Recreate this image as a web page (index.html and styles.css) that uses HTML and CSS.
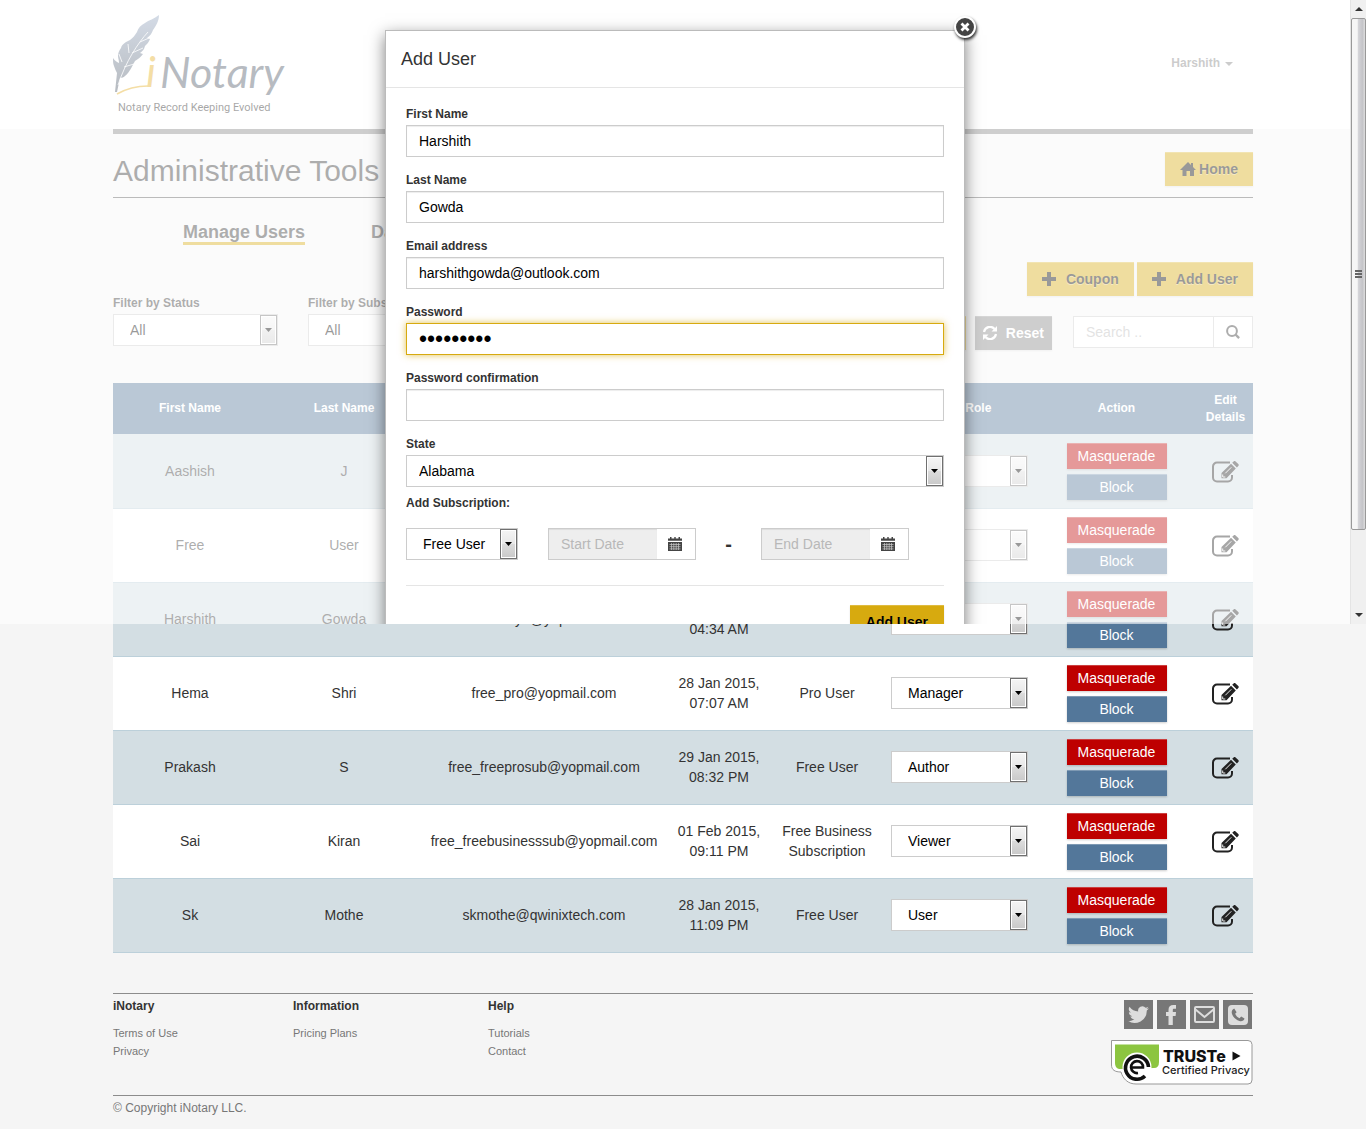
FILE: index.html
```html
<!DOCTYPE html>
<html lang="en">
<head>
<meta charset="utf-8">
<title>iNotary - Administrative Tools</title>
<meta name="viewport" content="width=device-width, initial-scale=1">
<link rel="stylesheet" href="styles.css">
</head>
<body>
<svg class="sprite" aria-hidden="true">
  <symbol id="i-edit" viewBox="0 0 27 22">
    <path d="M18 1.500H5A4 4 0 0 0 1 5.500v11a4 4 0 0 0 4 4h11a4 4 0 0 0 4-4V14" fill="none" stroke="currentColor" stroke-width="2"/>
    <path d="M9.500 12 19 2.800l4.800 4.800L14.500 17.200h-5zM20.200 1.800 21.600.4q1-.9 2 0l2.700 2.700q.9 1 0 2L24.900 6.500z" fill="currentColor"/>
    <path d="M10.700 13.500v2.500h2.600M13.300 12.300l6-6" stroke="#fff" fill="none" stroke-width=".9"/>
  </symbol>
  <symbol id="i-cal" viewBox="0 0 14 14">
    <path d="M0 1.500h2V0h1.500v1.500h2.800V0h1.400v1.500h2.800V0H12v1.500h2v2.300H0z" fill="#444"/>
    <path d="M0 5h14v9H0z" fill="#444"/>
    <path d="M1.500 7.500h11M1.500 9.700h11M1.500 11.900h11M3.500 6v7M5.800 6v7M8.200 6v7M10.500 6v7" stroke="#ccc" stroke-width=".7"/>
  </symbol>
  <symbol id="i-plus" viewBox="0 0 14 14"><path d="M5 0h4v5h5v4H9v5H5V9H0V5h5z" fill="currentColor"/></symbol>
</svg>

<header class="site-header">
  <div class="container header-row">
    <a class="logo" href="#" aria-label="iNotary">
      <svg width="180" height="104" viewBox="0 0 180 104">
        <defs><linearGradient id="quill" x1="0" y1="0" x2="0" y2="1"><stop offset="0" stop-color="#93a5c0"/><stop offset="1" stop-color="#4b5664"/></linearGradient></defs>
        <path d="M46 0C41 4 36 5 32 8c-4 2-7 5-8 9-2 3-4 6-7 8-4 2-8 4-9 8-2 3-3 5-3 8 0 2 1 4 1 7-2-1-4-2-6-5 0 3 0 6 1 8 1 3 2 5 3 7L2 77h2l3-14c2 0 4-1 5-2 5-4 7-10 10-15 3-2 6-4 8-7l-3-1c4-3 4-4 5-7 2-2 4-4 5-7l-3-1c3-2 5-5 6-8 3-4 6-9 6-15z" fill="url(#quill)"/>
        <path d="M35 17C25 28 13 46 5 70M9 47l-3-8M16 38l-1-9M11 52l10-3M19 38l11-5M27 27l9-4" fill="none" stroke="#fff" stroke-width=".8"/>
        <path d="M4 79q14-8 31-8" fill="none" stroke="#e3ac1f" stroke-width="1.500"/>
        <text class="logo-i" x="33" y="72">i</text>
        <text class="logo-name" x="47" y="73">Notary</text>
        <text class="logo-tag" x="5" y="96">Notary Record Keeping Evolved</text>
      </svg>
    </a>
    <a class="user-menu" href="#">Harshith <span class="caret"></span></a>
  </div>
</header>

<main class="container main">
  <div class="title-row">
    <h1>Administrative Tools</h1>
    <button class="btn btn-gold home" type="button"><svg width="16" height="14" viewBox="0 0 16 14"><path d="M8 0 11 3V1h2v4l3 3h-2v6h-4V9H6.500v5H2.500V8H0z" fill="currentColor"/></svg><span>Home</span></button>
  </div>
  <nav class="tabs"><a class="active" href="#">Manage Users</a><a href="#">Dashboard</a></nav>

  <div class="toolbar">
    <div class="filters">
      <div class="filter"><label for="f-status">Filter by Status</label><select id="f-status"><option>All</option></select></div>
      <div class="filter"><label for="f-sub">Filter by Subscription</label><select id="f-sub"><option>All</option></select></div>
    </div>
    <div class="actions">
      <div class="action-row add-row">
        <button class="btn btn-gold wide" type="button"><svg width="14" height="14"><use href="#i-plus"/></svg><span>Coupon</span></button>
        <button class="btn btn-gold wide" type="button"><svg width="14" height="14"><use href="#i-plus"/></svg><span>Add User</span></button>
      </div>
      <div class="action-row">
        <button class="btn btn-gold" type="button">Filter</button>
        <button class="btn btn-gray" type="button"><svg width="14" height="14" viewBox="0 0 14 14"><path d="M1 6A6 6 0 0 1 11.500 3M13 8A6 6 0 0 1 2.500 11" fill="none" stroke="currentColor" stroke-width="2.200"/><path d="M14 0v5.500H8.500zM0 14V8.500h5.500z" fill="currentColor"/></svg><span>Reset</span></button>
        <div class="search">
          <input type="text" placeholder="Search .." aria-label="Search">
          <button type="button" aria-label="Search"><svg width="14" height="14" viewBox="0 0 14 14"><circle cx="6" cy="6" r="4.900" fill="none" stroke="currentColor" stroke-width="2"/><path d="m9.500 9.500 3.600 3.600" stroke="currentColor" stroke-width="2.400"/></svg></button>
        </div>
      </div>
    </div>
  </div>

  <table class="users">
    <colgroup><col class="c-name"><col class="c-name"><col class="c-mail"><col class="c-date"><col class="c-sub"><col class="c-role"><col class="c-act"><col class="c-edit"></colgroup>
    <thead><tr><th>First Name</th><th>Last Name</th><th>Email</th><th>Created</th><th>Subscription</th><th>Select Role</th><th>Action</th><th>Edit Details</th></tr></thead>
    <tbody>
      <tr><td>Aashish</td><td>J</td><td>aashish@yopmail.com</td><td>28 Jan 2015, 05:10 AM</td><td>Free User</td><td><select aria-label="Role of Aashish"><option>User</option></select></td><td class="act"><button class="mini red" type="button">Masquerade</button><button class="mini blue" type="button">Block</button></td><td class="act"><a class="edit" href="#" aria-label="Edit"><svg width="27" height="22"><use href="#i-edit"/></svg></a></td></tr>
      <tr><td>Free</td><td>User</td><td>free_user@yopmail.com</td><td>28 Jan 2015, 06:22 AM</td><td>Free User</td><td><select aria-label="Role of Free"><option>User</option></select></td><td class="act"><button class="mini red" type="button">Masquerade</button><button class="mini blue" type="button">Block</button></td><td class="act"><a class="edit" href="#" aria-label="Edit"><svg width="27" height="22"><use href="#i-edit"/></svg></a></td></tr>
      <tr><td>Harshith</td><td>Gowda</td><td>harshithya@yopmail.com</td><td>28 Jan 2015, 04:34 AM</td><td>Free User</td><td><select aria-label="Role of Harshith"><option>User</option></select></td><td class="act"><button class="mini red" type="button">Masquerade</button><button class="mini blue" type="button">Block</button></td><td class="act"><a class="edit" href="#" aria-label="Edit"><svg width="27" height="22"><use href="#i-edit"/></svg></a></td></tr>
      <tr><td>Hema</td><td>Shri</td><td>free_pro@yopmail.com</td><td>28 Jan 2015, 07:07 AM</td><td>Pro User</td><td><select aria-label="Role of Hema"><option>Manager</option></select></td><td class="act"><button class="mini red" type="button">Masquerade</button><button class="mini blue" type="button">Block</button></td><td class="act"><a class="edit" href="#" aria-label="Edit"><svg width="27" height="22"><use href="#i-edit"/></svg></a></td></tr>
      <tr><td>Prakash</td><td>S</td><td>free_freeprosub@yopmail.com</td><td>29 Jan 2015, 08:32 PM</td><td>Free User</td><td><select aria-label="Role of Prakash"><option>Author</option></select></td><td class="act"><button class="mini red" type="button">Masquerade</button><button class="mini blue" type="button">Block</button></td><td class="act"><a class="edit" href="#" aria-label="Edit"><svg width="27" height="22"><use href="#i-edit"/></svg></a></td></tr>
      <tr><td>Sai</td><td>Kiran</td><td>free_freebusinesssub@yopmail.com</td><td>01 Feb 2015, 09:11 PM</td><td>Free Business Subscription</td><td><select aria-label="Role of Sai"><option>Viewer</option></select></td><td class="act"><button class="mini red" type="button">Masquerade</button><button class="mini blue" type="button">Block</button></td><td class="act"><a class="edit" href="#" aria-label="Edit"><svg width="27" height="22"><use href="#i-edit"/></svg></a></td></tr>
      <tr><td>Sk</td><td>Mothe</td><td>skmothe@qwinixtech.com</td><td>28 Jan 2015, 11:09 PM</td><td>Free User</td><td><select aria-label="Role of Sk"><option>User</option></select></td><td class="act"><button class="mini red" type="button">Masquerade</button><button class="mini blue" type="button">Block</button></td><td class="act"><a class="edit" href="#" aria-label="Edit"><svg width="27" height="22"><use href="#i-edit"/></svg></a></td></tr>
    </tbody>
  </table>
</main>

<footer class="container footer">
  <div class="footer-main">
    <div class="fcol first"><h2>iNotary</h2><a href="#">Terms of Use</a><a href="#">Privacy</a></div>
    <div class="fcol second"><h2>Information</h2><a href="#">Pricing Plans</a></div>
    <div class="fcol"><h2>Help</h2><a href="#">Tutorials</a><a href="#">Contact</a></div>
    <div class="badges">
      <div class="social">
        <a href="#" aria-label="Twitter"><svg width="21" height="21" viewBox="0 0 24 24"><path fill="#ddd" d="M23.900 4.900a10 10 0 0 1-2.800.8 5 5 0 0 0 2.100-2.700 10 10 0 0 1-3.100 1.200 4.900 4.900 0 0 0-8.400 4.500A14 14 0 0 1 1.700 3.200a4.900 4.900 0 0 0 1.500 6.500 5 5 0 0 1-2.200-.6 4.900 4.900 0 0 0 3.900 4.900 5 5 0 0 1-2.200.1 4.900 4.900 0 0 0 4.600 3.400A10 10 0 0 1 0 19.500 14 14 0 0 0 21.500 7.400a10 10 0 0 0 2.400-2.500z"/></svg></a>
        <a href="#" aria-label="Facebook"><svg width="11" height="20" viewBox="0 0 11 20"><path fill="#ddd" d="M2.500 20v-9H0V7h2.500V5c0-3.300 1.700-5 5-5H10v3.800H8.200C7 3.800 6.800 4.300 6.800 5.200V7H10l-.4 4H6.800v9z"/></svg></a>
        <a href="#" aria-label="Email"><svg width="21" height="17" viewBox="0 0 21 17"><rect x="1" y="1" width="19" height="15" rx="1" fill="none" stroke="#ddd" stroke-width="2"/><path d="m1.500 3.500 9 7.500 9-7.500" fill="none" stroke="#ddd" stroke-width="2"/></svg></a>
        <a href="#" aria-label="Phone"><svg width="20" height="20" viewBox="0 0 20 20"><rect width="20" height="20" rx="4" fill="#ddd"/><path d="M6.200 3.500C4 4.500 3 7 4.200 9.500c1.500 3.300 4 5.500 7.300 6.500 2.300.6 4.500-.4 5-2.500l-3.300-2-1.700 1.700C9.200 12 8 10.600 7.200 8.700L8.600 7.200z" fill="#777"/></svg></a>
      </div>
      <a class="truste" href="#" aria-label="TRUSTe Certified Privacy">
        <svg width="142" height="45" viewBox="0 0 142 45">
          <path d="M.5.500H137a4 4 0 0 1 4 4V40a4 4 0 0 1-4 4H25C17 44 12 39 10 32 4 32 .5 30 .5 25z" fill="#fff" stroke="#999"/>
          <path d="M4 4.500h44V22q0 6-5 6L8 29q-4-1-4-6z" fill="#8cc540"/>
          <circle cx="26" cy="27" r="14.500" fill="#fff"/>
          <path d="M37.500 27A11.500 11.500 0 1 0 34 36" fill="none" stroke="#111" stroke-width="3.600"/>
          <path d="M20 27.500H32A6 6 0 1 0 27 33" fill="none" stroke="#111" stroke-width="2.600"/>
          <text class="tr-name" x="52" y="22">TRUSTe</text>
          <path d="m121.500 11.500 8 4.500-8 4.500z" fill="#111"/>
          <text class="tr-sub" x="51" y="34">Certified Privacy</text>
        </svg>
      </a>
    </div>
  </div>
  <p class="copy">© Copyright iNotary LLC.</p>
</footer>

<div class="overlay">
  <div class="overlay-body">
    <section class="modal" role="dialog" aria-labelledby="m-title">
      <button class="close" type="button" aria-label="Close"><svg width="10" height="10" viewBox="0 0 10 10"><path d="m1.500 1.500 7 7m0-7-7 7" stroke="#fff" stroke-width="2.800"/></svg></button>
      <h2 id="m-title">Add User</h2>
      <form class="modal-form">
        <div class="group"><label for="fn">First Name</label><input id="fn" type="text" value="Harshith"></div>
        <div class="group"><label for="ln">Last Name</label><input id="ln" type="text" value="Gowda"></div>
        <div class="group"><label for="em">Email address</label><input id="em" type="email" value="harshithgowda@outlook.com"></div>
        <div class="group"><label for="pw">Password</label><input id="pw" class="focused" type="password" value="password1"></div>
        <div class="group"><label for="pc">Password confirmation</label><input id="pc" type="password"></div>
        <div class="group state"><label for="st">State</label><select id="st"><option>Alabama</option></select></div>
        <label for="plan">Add Subscription:</label>
        <div class="sub-row">
          <select id="plan"><option>Free User</option></select>
          <div class="date"><input type="text" placeholder="Start Date" aria-label="Start Date" disabled><button type="button" aria-label="Pick start date"><svg width="14" height="14"><use href="#i-cal"/></svg></button></div>
          <span class="dash">-</span>
          <div class="date"><input type="text" placeholder="End Date" aria-label="End Date" disabled><button type="button" aria-label="Pick end date"><svg width="14" height="14"><use href="#i-cal"/></svg></button></div>
        </div>
        <div class="modal-foot"><button class="btn btn-gold submit" type="submit">Add User</button></div>
      </form>
    </section>
  </div>
  <div class="scrollbar" aria-hidden="true">
    <span class="arrow up"></span>
    <span class="thumb"><i></i><i></i><i></i></span>
    <span class="arrow down"></span>
  </div>
</div>
</body>
</html>
```
FILE: styles.css
```css
* { box-sizing: border-box; }
body { margin: 0; background: #f5f5f5; color: #333; font: 14px/20px "Liberation Sans", Arial, sans-serif; }
a { color: inherit; text-decoration: none; }
button, input, select { font: inherit; color: inherit; margin: 0; border-radius: 0; }
svg { display: block; }
.sprite { display: none; }
label { display: block; font-size: 12px; line-height: 17px; font-weight: bold; }
.container { max-width: 1140px; margin: 0 auto; }

.site-header { background: #fff; }
.header-row { display: flex; justify-content: space-between; align-items: flex-start; min-height: 129px; padding-top: 15px; }
.logo-i, .logo-name { font-family: Lato, sans-serif; font-style: italic; font-weight: 400; font-size: 43px; fill: #4b5664; }
.logo-i { fill: #e3ac1f; }
.logo-tag { font: 400 11px Roboto, sans-serif; fill: #222; }
.user-menu { display: flex; align-items: center; gap: 5px; margin: 40px 20px 0 0; font-size: 12px; line-height: 17px; font-weight: bold; color: #7f7f7f; }
.caret { border: 4px solid transparent; border-top-color: currentColor; border-bottom: 0; }

.main { border-top: 5px solid #848484; }
.title-row { display: flex; justify-content: space-between; align-items: center; padding: 18px 0 11px; border-bottom: 1px solid #555; }
h1 { margin: 0; padding-top: 3px; font-size: 30px; line-height: 31px; font-weight: normal; }
.btn { display: flex; align-items: center; justify-content: center; gap: 4px; height: 34px; padding: 0 15px 2px; border: 0; border-top: 1px solid #dfbb3f; font-weight: bold; line-height: 20px; box-shadow: 0 1px 2px rgba(0,0,0,.1); }
.btn-gold { background: #d7aa0f; color: #000; text-shadow: 0 1px 0 rgba(255,255,255,.4); }
.btn-gray { background: #848484; border-color: #999; color: #fff; padding: 0 8px 2px; gap: 9px; }
.btn.home { gap: 3px; }
.btn.wide { gap: 10px; }
.btn.submit { padding: 0 16px 2px; }
.tabs { display: flex; gap: 66px; padding: 24px 0 0 70px; font-size: 18px; line-height: 20px; font-weight: bold; }
.tabs a { border-bottom: 3px solid transparent; }
.tabs .active { border-color: #d7aa0f; }

.toolbar { display: flex; justify-content: space-between; align-items: flex-end; margin: 17px 0 33px; }
.filters { display: flex; gap: 30px; padding-bottom: 4px; }
.filter { width: 165px; }
.filter label { margin-bottom: 2px; }
.actions { display: flex; flex-direction: column; gap: 20px; align-items: flex-end; }
.action-row { display: flex; gap: 9px; align-items: flex-start; }
.add-row { gap: 3px; }
.search { display: flex; width: 180px; height: 32px; margin-left: 12px; border: 1px solid #ccc; background: #fff; }
.search input { flex: 1; min-width: 0; border: 0; padding: 0 12px; background: none; }
.search button { width: 39px; padding: 0 12px; border: 0; border-left: 1px solid #ccc; background: none; }
::placeholder { color: #b8b8b8; opacity: 1; }

select, .group input { display: block; width: 100%; height: 32px; border: 1px solid #ccc; background-color: #fff; color: #000; }
select {
  appearance: none; padding: 0 18px 0 16px; background-repeat: no-repeat; background-position: right 0 center;
  background-image: url("data:image/svg+xml,%3Csvg xmlns='http://www.w3.org/2000/svg' width='17' height='30'%3E%3Cdefs%3E%3ClinearGradient id='g' x2='0' y2='1'%3E%3Cstop offset='0' stop-color='%23f4f4f4'/%3E%3Cstop offset='.5' stop-color='%23e8e8e8'/%3E%3Cstop offset='.5' stop-color='%23dcdcdc'/%3E%3Cstop offset='1' stop-color='%23cacaca'/%3E%3C/linearGradient%3E%3C/defs%3E%3Crect x='.5' y='.5' width='16' height='29' fill='%23fff' stroke='%23707070'/%3E%3Crect x='2' y='2' width='13' height='26' fill='url(%23g)'/%3E%3Cpath d='M5 13h7l-3.500 4z'/%3E%3C/svg%3E");
}

.users { width: 100%; table-layout: fixed; border-collapse: separate; border-spacing: 0; border-bottom: 1px solid #bcd0da; text-align: center; }
.c-name { width: 154px; } .c-mail { width: 246px; } .c-date { width: 104px; } .c-sub { width: 112px; }
.c-role { width: 152px; } .c-act { width: 163px; } .c-edit { width: 55px; }
.users th { height: 51px; padding: 0 7px; background: #53779a; color: #fff; font-size: 12px; line-height: 17px; }
.users td { height: 74px; padding: 7px 8px 9px; border-top: 1px solid #bcd0da; background: #fff; }
.users td.act { padding: 8px; }
.users td:nth-child(3) { padding: 7px 0 9px; }
.users td:nth-child(6) { padding-right: 7px; }
.users tr:nth-child(odd) td { background: #d3dee3; }
.users tbody tr:first-child td { border-color: #d3dee3; }
.mini { display: block; width: 100px; height: 26px; margin: 0 auto; padding: 0 0 2px; border: 0; border-top: 1px solid #cb4040; color: #fff; box-shadow: 0 1px 2px rgba(0,0,0,.2); }
.mini + .mini { margin-top: 5px; }
.red { background: #be0000; }
.blue { background: #53779a; border-color: #7e99b3; }
.edit { display: inline-block; vertical-align: middle; color: #222; }

.footer { margin-top: 40px; border-top: 1px solid #8c8c8c; }
.footer-main { display: flex; min-height: 102px; border-bottom: 1px solid #8c8c8c; }
.fcol { padding-top: 4px; font-size: 11px; line-height: 18px; color: #777; }
.fcol.first { width: 180px; } .fcol.second { width: 195px; }
.fcol h2 { margin: 0 0 9px; font-size: 12px; line-height: 17px; color: #333; }
.fcol a { display: block; }
.badges { margin-left: auto; padding-top: 6px; }
.social { display: flex; justify-content: flex-end; gap: 4px; padding-right: 1px; margin-bottom: 11px; }
.social a { display: flex; align-items: center; justify-content: center; width: 29px; height: 29px; background: #777; }
.tr-name { font: 800 16px Inter, sans-serif; fill: #111; }
.tr-sub { font: 500 11px Inter, sans-serif; fill: #222; }
.copy { margin: 4px 0 12px; font-size: 12px; line-height: 17px; color: #777; }

.overlay { position: absolute; top: 0; left: 0; right: 0; height: 624px; display: flex; overflow: hidden; background: rgba(255,255,255,.6); }
.overlay-body { flex: 1; padding-top: 30px; }
.modal { position: relative; width: 580px; margin: 0 auto; border: 1px solid #bbb; background: #fff; box-shadow: 0 5px 15px rgba(0,0,0,.5); }
.modal h2 { margin: 0; padding: 18px 15px; border-bottom: 1px solid #e5e5e5; font-size: 18px; line-height: 20px; font-weight: normal; }
.modal-form { padding: 18px 20px 20px; }
.group { margin-bottom: 15px; }
.group label { margin-bottom: 2px; }
.group input { padding: 0 12px; box-shadow: inset 0 1px 1px rgba(0,0,0,.075); }
.group input[type="password"] { font-size: 23px; }
.group .focused { border-color: #d7aa0f; box-shadow: 0 0 7px rgba(215,170,15,.7); }
.group select { padding-left: 12px; }
.group.state { margin-bottom: 8px; }
.sub-row { display: flex; margin: 16px 0 25px; }
.sub-row > select { width: 112px; margin-right: 30px; }
.date { display: flex; width: 148px; height: 32px; border: 1px solid #ccc; }
.date input { flex: 1; min-width: 0; padding: 0 12px; border: 0; background: #eee; box-shadow: inset 0 1px 1px rgba(0,0,0,.075); }
.date button { width: 38px; padding: 0 12px 0 11px; border: 0; background: #fff; }
.dash { width: 65px; text-align: center; font-size: 20px; line-height: 32px; font-weight: bold; }
.modal-foot { display: flex; justify-content: flex-end; padding-top: 19px; border-top: 1px solid #e5e5e5; }
.close { position: absolute; top: -15px; right: -12px; display: flex; align-items: center; justify-content: center; width: 22px; height: 22px; padding: 0; border: 2px solid #fff; border-radius: 50%; background: #444; box-shadow: 1px 2px 3px rgba(0,0,0,.8); }

.scrollbar { display: flex; flex-direction: column; width: 16px; background: #f0f0f0; border-left: 1px solid #e4e4e4; }
.arrow { display: flex; height: 18px; align-items: center; justify-content: center; }
.arrow::before { content: ""; border: 4px solid transparent; }
.up::before { border-bottom-color: #333; border-top: 0; }
.down { margin-top: auto; }
.down::before { border-top-color: #333; border-bottom: 0; }
.thumb { display: flex; flex-direction: column; align-items: center; justify-content: center; gap: 1px; height: 512px; border: 1px solid #999; border-radius: 2px; background: linear-gradient(90deg, #f6f6f6 0 40%, #d4d4d8 50%, #c4c4c8 80%, #ddd); }
.thumb i { width: 7px; height: 2px; background: #666; }
```
